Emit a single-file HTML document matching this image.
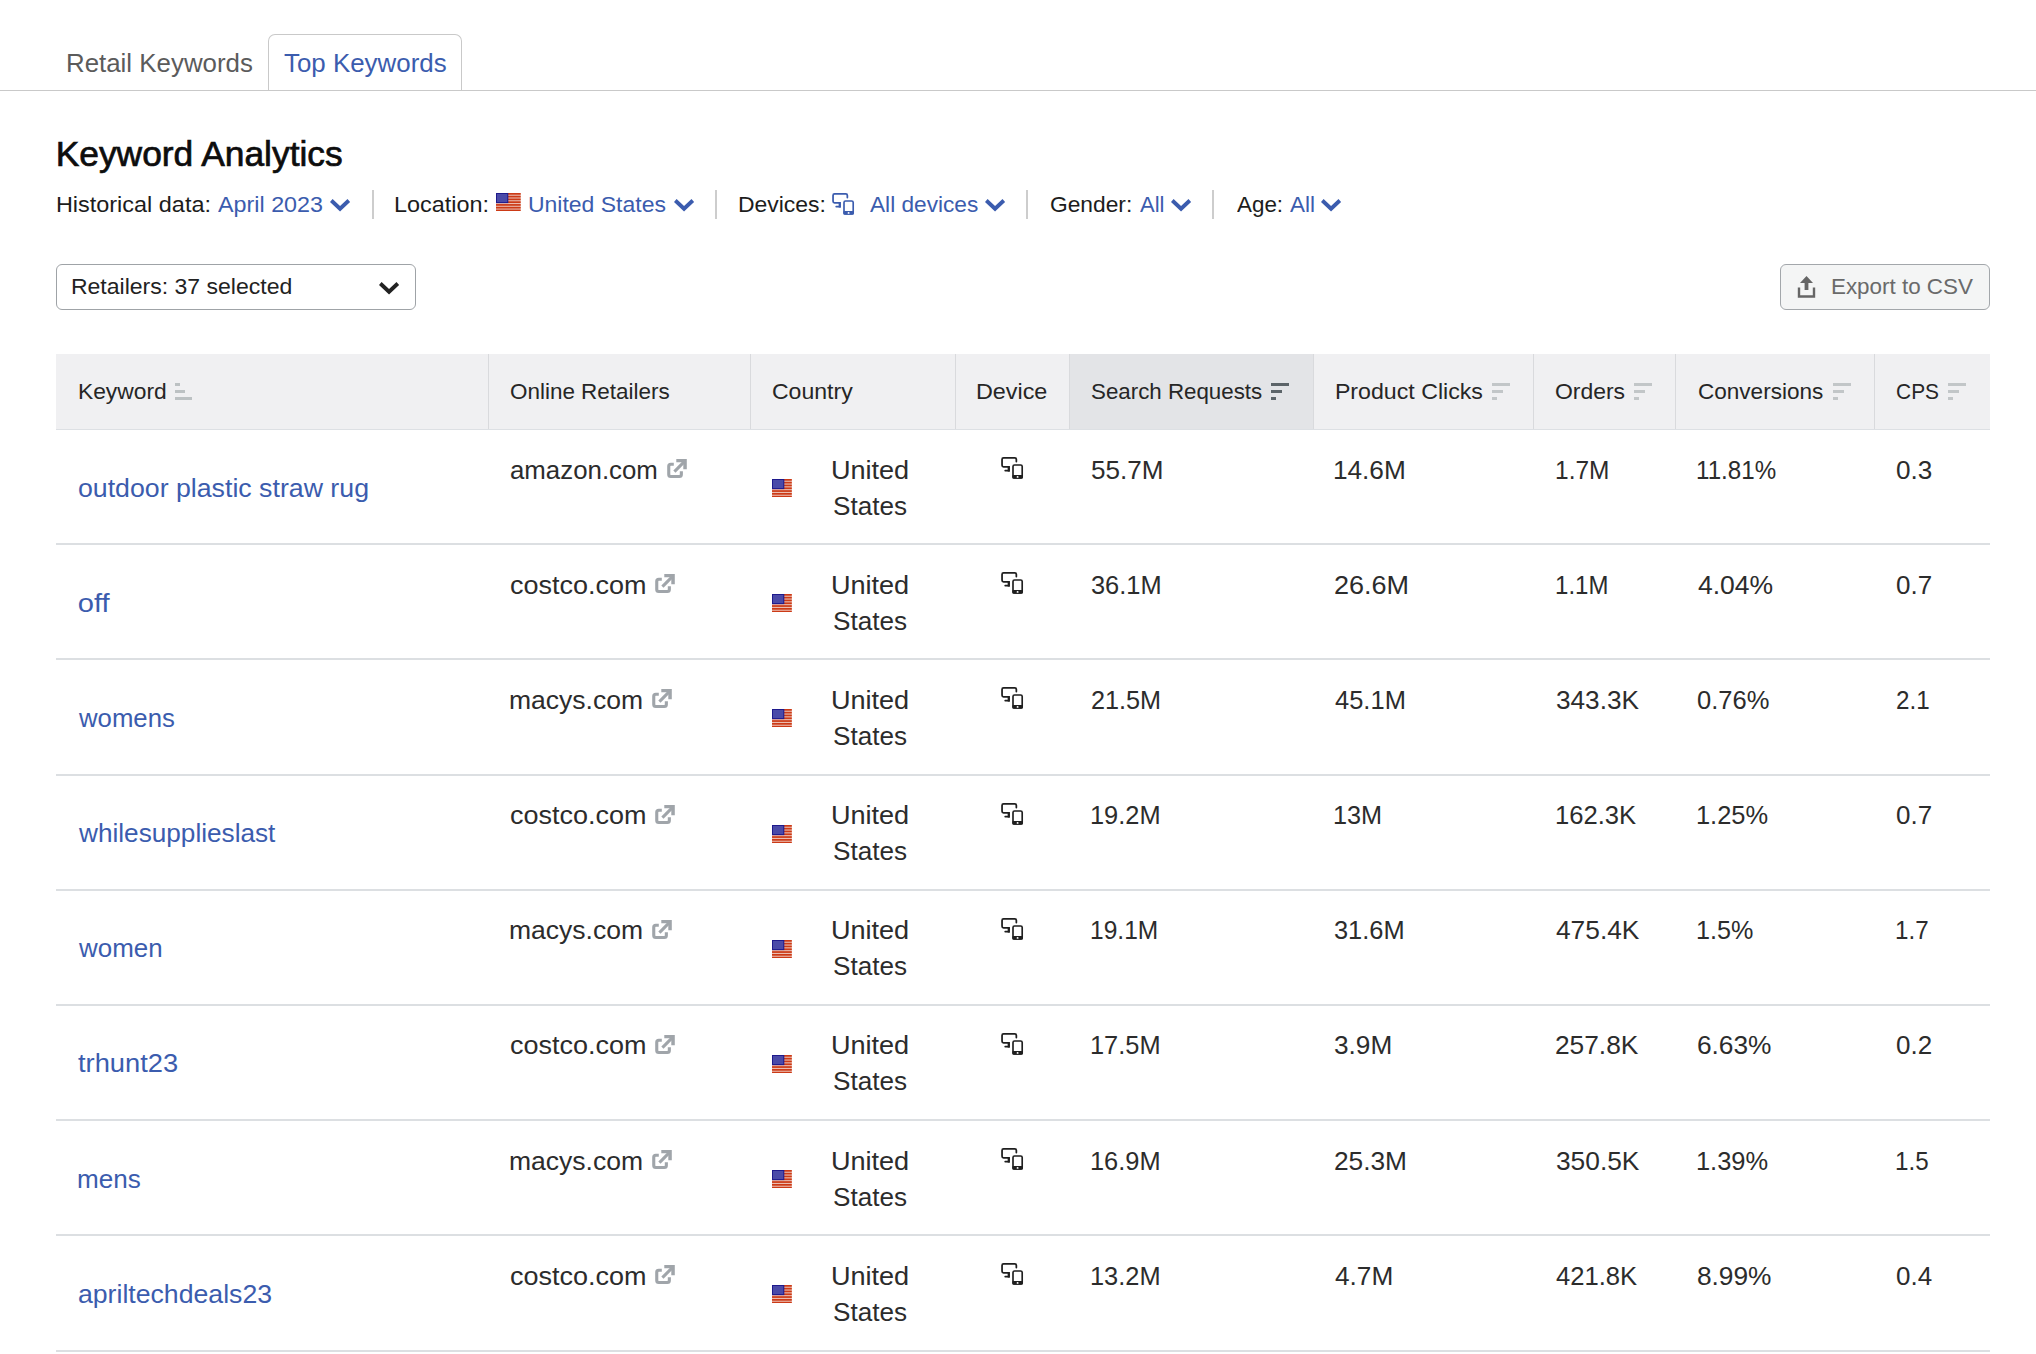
<!DOCTYPE html>
<html><head><meta charset="utf-8"><title>Keyword Analytics</title>
<style>
html,body{margin:0;padding:0;background:#fff;}
body{width:2036px;height:1354px;position:relative;overflow:hidden;font-family:"Liberation Sans",sans-serif;}
.abs{position:absolute;}
.t{position:absolute;white-space:nowrap;}
svg{display:block}
</style></head><body>
<div class="abs" style="left:0;top:89.5px;width:2036px;height:1.5px;background:#c9c9c9"></div>
<div class="abs" style="left:268px;top:34px;width:194px;height:57px;border:1.5px solid #c9c9c9;border-bottom:none;border-radius:7px 7px 0 0;box-sizing:border-box;"></div>
<div class="t" style="left:66.48px;top:50.58px;font-size:25.3px;line-height:25.3px;color:#5b5b5b;transform:scaleX(1.0229);transform-origin:2.02px 0;">Retail Keywords</div>
<div class="t" style="left:283.99px;top:50.58px;font-size:25.3px;line-height:25.3px;color:#3b5cae;transform:scaleX(1.0235);transform-origin:0.51px 0;">Top Keywords</div>
<div class="t" style="left:55.67px;top:136.45px;font-size:35.38px;line-height:35.38px;color:#0d0d0d;-webkit-text-stroke:0.7px #0d0d0d;">Keyword Analytics</div>
<div class="t" style="left:55.74px;top:194.18px;font-size:22.0px;line-height:22.0px;color:#1c1c1c;transform:scaleX(1.0658);transform-origin:1.76px 0;">Historical data:</div>
<div class="t" style="left:218.00px;top:194.18px;font-size:22.0px;line-height:22.0px;color:#3b5cae;transform:scaleX(1.0599);transform-origin:0.00px 0;">April 2023</div>
<svg class="abs" style="left:330px;top:198.5px" width="21.0" height="13.0" viewBox="0 0 21.0 13.0"><polygon points="0.00,2.90 2.60,0.00 10.05,7.00 17.50,0.00 20.10,2.90 10.05,12.40" fill="#3b5cae"/></svg>
<div class="abs" style="left:371.5px;top:189.5px;width:2px;height:29px;background:#cdcdcd"></div>
<div class="t" style="left:394.49px;top:194.18px;font-size:22.0px;line-height:22.0px;color:#1c1c1c;transform:scaleX(1.0647);transform-origin:1.76px 0;">Location:</div>
<svg class="abs" style="left:496.2px;top:192.8px" width="24.7" height="18.3" viewBox="0 0 24.7 18.3"><rect x="0" y="0" width="24.7" height="18.3" fill="#ebbcb0"/><rect x="0" y="0.000" width="24.7" height="1.7" fill="#cc3a16"/><rect x="0" y="2.767" width="24.7" height="1.7" fill="#cc3a16"/><rect x="0" y="5.533" width="24.7" height="1.7" fill="#cc3a16"/><rect x="0" y="8.300" width="24.7" height="1.7" fill="#cc3a16"/><rect x="0" y="11.067" width="24.7" height="1.7" fill="#cc3a16"/><rect x="0" y="13.833" width="24.7" height="1.7" fill="#cc3a16"/><rect x="0" y="16.600" width="24.7" height="1.7" fill="#cc3a16"/><rect x="0" y="0" width="12.30" height="10.10" fill="#1e1a8c"/><rect x="1" y="1" width="10.30" height="8.10" fill="#4a4aa8"/></svg>
<div class="t" style="left:527.85px;top:194.18px;font-size:22.0px;line-height:22.0px;color:#3b5cae;transform:scaleX(1.0448);transform-origin:1.65px 0;">United States</div>
<svg class="abs" style="left:673.5px;top:198.5px" width="21.0" height="13.0" viewBox="0 0 21.0 13.0"><polygon points="0.00,2.90 2.60,0.00 10.05,7.00 17.50,0.00 20.10,2.90 10.05,12.40" fill="#3b5cae"/></svg>
<div class="abs" style="left:714.5px;top:189.5px;width:2px;height:29px;background:#cdcdcd"></div>
<div class="t" style="left:737.74px;top:194.18px;font-size:22.0px;line-height:22.0px;color:#1c1c1c;transform:scaleX(1.0432);transform-origin:1.76px 0;">Devices:</div>
<svg class="abs" style="left:830.5px;top:192px" width="26" height="26" viewBox="0 0 26 26"><path d="M16.35 5.6 V3.5 Q16.35 1.95 14.8 1.95 H3.5 Q2.05 1.95 2.05 3.5 V9.3 Q2.05 10.85 3.5 10.85 H8.8 V14.6 H5.2" fill="none" stroke="#3b5cae" stroke-width="1.75" stroke-linecap="round"/><path d="M7.7 10.1 H9.9 V15.6 H7.7 Z" fill="#3b5cae"/><rect x="13" y="9" width="9.2" height="13" rx="1.5" fill="none" stroke="#3b5cae" stroke-width="1.65"/><rect x="12.3" y="18.9" width="10.6" height="3.9" rx="1.2" fill="#3b5cae"/><circle cx="17.6" cy="20.9" r="0.95" fill="#fff"/></svg><div class="t" style="left:869.50px;top:194.18px;font-size:22.0px;line-height:22.0px;color:#3b5cae;transform:scaleX(1.0298);transform-origin:0.00px 0;">All devices</div>
<svg class="abs" style="left:985.25px;top:198.5px" width="21.0" height="13.0" viewBox="0 0 21.0 13.0"><polygon points="0.00,2.90 2.60,0.00 10.05,7.00 17.50,0.00 20.10,2.90 10.05,12.40" fill="#3b5cae"/></svg>
<div class="abs" style="left:1026px;top:189.5px;width:2px;height:29px;background:#cdcdcd"></div>
<div class="t" style="left:1049.65px;top:194.18px;font-size:22.0px;line-height:22.0px;color:#1c1c1c;transform:scaleX(1.0348);transform-origin:1.10px 0;">Gender:</div>
<div class="t" style="left:1139.50px;top:194.18px;font-size:22.0px;line-height:22.0px;color:#3b5cae;transform:scaleX(1.0004);transform-origin:0.00px 0;">All</div>
<svg class="abs" style="left:1171px;top:198.5px" width="21.0" height="13.0" viewBox="0 0 21.0 13.0"><polygon points="0.00,2.90 2.60,0.00 10.05,7.00 17.50,0.00 20.10,2.90 10.05,12.40" fill="#3b5cae"/></svg>
<div class="abs" style="left:1212px;top:189.5px;width:2px;height:29px;background:#cdcdcd"></div>
<div class="t" style="left:1236.75px;top:194.18px;font-size:22.0px;line-height:22.0px;color:#1c1c1c;transform:scaleX(1.0178);transform-origin:0.00px 0;">Age:</div>
<div class="t" style="left:1289.50px;top:194.18px;font-size:22.0px;line-height:22.0px;color:#3b5cae;transform:scaleX(1.0222);transform-origin:0.00px 0;">All</div>
<svg class="abs" style="left:1321px;top:198.5px" width="21.0" height="13.0" viewBox="0 0 21.0 13.0"><polygon points="0.00,2.90 2.60,0.00 10.05,7.00 17.50,0.00 20.10,2.90 10.05,12.40" fill="#3b5cae"/></svg>
<div class="abs" style="left:56px;top:264px;width:360px;height:46px;border:1.5px solid #9fa3a7;border-radius:6px;box-sizing:border-box"></div>
<div class="t" style="left:70.74px;top:276.18px;font-size:22.0px;line-height:22.0px;color:#222;transform:scaleX(1.0464);transform-origin:1.76px 0;">Retailers: 37 selected</div>
<svg class="abs" style="left:379px;top:281.6px" width="21.0" height="13.0" viewBox="0 0 21.0 13.0"><polygon points="0.00,2.90 2.60,0.00 10.05,7.00 17.50,0.00 20.10,2.90 10.05,12.40" fill="#222"/></svg>
<div class="abs" style="left:1780px;top:264px;width:210px;height:46px;border:1.5px solid #a3a7ab;border-radius:6px;box-sizing:border-box;background:#f4f5f5"></div>
<svg class="abs" style="left:1796px;top:275px" width="22" height="24" viewBox="0 0 22 24"><path d="M10.5 1 L17 8 H12.4 V15 H8.6 V8 H4 Z" fill="#666"/><path d="M3 12.5 V21.5 H18 V12.5" fill="none" stroke="#666" stroke-width="2.4"/></svg><div class="t" style="left:1831.49px;top:276.18px;font-size:22.0px;line-height:22.0px;color:#6a6a6a;transform:scaleX(1.0182);transform-origin:1.76px 0;">Export to CSV</div>
<div class="abs" style="left:56px;top:354px;width:1934px;height:76px;background:#f0f0f2"></div>
<div class="abs" style="left:1069.5px;top:354px;width:244px;height:76px;background:#e3e4e7"></div>
<div class="abs" style="left:488.0px;top:354px;width:1px;height:75px;background:#d9dadd"></div>
<div class="abs" style="left:750.0px;top:354px;width:1px;height:75px;background:#d9dadd"></div>
<div class="abs" style="left:955.0px;top:354px;width:1px;height:75px;background:#d9dadd"></div>
<div class="abs" style="left:1069.0px;top:354px;width:1px;height:75px;background:#d9dadd"></div>
<div class="abs" style="left:1313.0px;top:354px;width:1px;height:75px;background:#d9dadd"></div>
<div class="abs" style="left:1533.0px;top:354px;width:1px;height:75px;background:#d9dadd"></div>
<div class="abs" style="left:1675.0px;top:354px;width:1px;height:75px;background:#d9dadd"></div>
<div class="abs" style="left:1874.0px;top:354px;width:1px;height:75px;background:#d9dadd"></div>
<div class="abs" style="left:56px;top:429px;width:1934px;height:1px;background:#dde0e4"></div>
<div class="t" style="left:77.72px;top:381.21px;font-size:22.2px;line-height:22.2px;color:#262626;transform:scaleX(1.0284);transform-origin:1.78px 0;">Keyword</div>
<div class="abs" style="left:175.1px;top:382.75px;width:5px;height:3.4px;background:#bcc1c3"></div><div class="abs" style="left:175.1px;top:389.5px;width:10px;height:3.4px;background:#bcc1c3"></div><div class="abs" style="left:175.1px;top:396.5px;width:17px;height:3.4px;background:#bcc1c3"></div>
<div class="t" style="left:510.00px;top:381.21px;font-size:22.2px;line-height:22.2px;color:#262626;transform:scaleX(1.0117);transform-origin:1.00px 0;">Online Retailers</div>
<div class="t" style="left:772.09px;top:381.21px;font-size:22.2px;line-height:22.2px;color:#262626;transform:scaleX(1.0393);transform-origin:1.11px 0;">Country</div>
<div class="t" style="left:976.22px;top:381.21px;font-size:22.2px;line-height:22.2px;color:#262626;transform:scaleX(1.0531);transform-origin:1.78px 0;">Device</div>
<div class="t" style="left:1090.90px;top:381.21px;font-size:22.2px;line-height:22.2px;color:#262626;transform:scaleX(1.0059);transform-origin:1.00px 0;">Search Requests</div>
<div class="abs" style="left:1270.7px;top:382.75px;width:18.4px;height:3.4px;background:#5c6469"></div><div class="abs" style="left:1270.7px;top:389.5px;width:11px;height:3.4px;background:#5c6469"></div><div class="abs" style="left:1270.7px;top:396.75px;width:5.4px;height:3.4px;background:#5c6469"></div>
<div class="t" style="left:1334.52px;top:381.21px;font-size:22.2px;line-height:22.2px;color:#262626;transform:scaleX(1.0438);transform-origin:1.78px 0;">Product Clicks</div>
<div class="abs" style="left:1491.7px;top:382.75px;width:18.4px;height:3.4px;background:#c2c6c8"></div><div class="abs" style="left:1491.7px;top:389.5px;width:11px;height:3.4px;background:#c2c6c8"></div><div class="abs" style="left:1491.7px;top:396.75px;width:5.4px;height:3.4px;background:#c2c6c8"></div>
<div class="t" style="left:1555.10px;top:381.21px;font-size:22.2px;line-height:22.2px;color:#262626;transform:scaleX(1.0341);transform-origin:1.00px 0;">Orders</div>
<div class="abs" style="left:1633.9px;top:382.75px;width:18.4px;height:3.4px;background:#c2c6c8"></div><div class="abs" style="left:1633.9px;top:389.5px;width:11px;height:3.4px;background:#c2c6c8"></div><div class="abs" style="left:1633.9px;top:396.75px;width:5.4px;height:3.4px;background:#c2c6c8"></div>
<div class="t" style="left:1697.89px;top:381.21px;font-size:22.2px;line-height:22.2px;color:#262626;transform:scaleX(1.0161);transform-origin:1.11px 0;">Conversions</div>
<div class="abs" style="left:1832.7px;top:382.75px;width:18.4px;height:3.4px;background:#c2c6c8"></div><div class="abs" style="left:1832.7px;top:389.5px;width:11px;height:3.4px;background:#c2c6c8"></div><div class="abs" style="left:1832.7px;top:396.75px;width:5.4px;height:3.4px;background:#c2c6c8"></div>
<div class="t" style="left:1896.29px;top:381.21px;font-size:22.2px;line-height:22.2px;color:#262626;transform:scaleX(0.9423);transform-origin:1.11px 0;">CPS</div>
<div class="abs" style="left:1948px;top:382.75px;width:18.4px;height:3.4px;background:#c2c6c8"></div><div class="abs" style="left:1948px;top:389.5px;width:11px;height:3.4px;background:#c2c6c8"></div><div class="abs" style="left:1948px;top:396.75px;width:5.4px;height:3.4px;background:#c2c6c8"></div>
<div class="t" style="left:77.74px;top:475.97px;font-size:25.2px;line-height:25.2px;color:#3b5cae;transform:scaleX(1.0607);transform-origin:1.01px 0;">outdoor plastic straw rug</div>
<div class="t" style="left:509.73px;top:457.63px;font-size:25.6px;line-height:25.6px;color:#2c2c2c;transform:scaleX(1.0092);transform-origin:1.02px 0;">amazon.com</div>
<svg class="abs" style="left:661.55px;top:454.00px" width="30" height="28" viewBox="0 0 30 28"><path d="M11.8 10.25 H8.75 Q6.75 10.25 6.75 12.25 V20.45 Q6.75 22.45 8.75 22.45 H17.35 Q19.35 22.45 19.35 20.45 V17.2" fill="none" stroke="#a0a5aa" stroke-width="3.1"/><polygon points="14.3,5.1 24.8,5.1 24.8,15.3 21.3,15.3 21.3,8.3 14.3,8.3" fill="#a0a5aa"/><path d="M12.4 17.6 L22.6 7.4" stroke="#a0a5aa" stroke-width="3.1" fill="none"/></svg><svg class="abs" style="left:772.1px;top:478.6px" width="19.8" height="18.5" viewBox="0 0 19.8 18.5"><rect x="0" y="0" width="19.8" height="18.5" fill="#ebbcb0"/><rect x="0" y="0.000" width="19.8" height="1.7" fill="#cc3a16"/><rect x="0" y="2.800" width="19.8" height="1.7" fill="#cc3a16"/><rect x="0" y="5.600" width="19.8" height="1.7" fill="#cc3a16"/><rect x="0" y="8.400" width="19.8" height="1.7" fill="#cc3a16"/><rect x="0" y="11.200" width="19.8" height="1.7" fill="#cc3a16"/><rect x="0" y="14.000" width="19.8" height="1.7" fill="#cc3a16"/><rect x="0" y="16.800" width="19.8" height="1.7" fill="#cc3a16"/><rect x="0" y="0" width="12.30" height="10.10" fill="#1e1a8c"/><rect x="1" y="1" width="10.30" height="8.10" fill="#4a4aa8"/></svg>
<div class="t" style="left:831.08px;top:457.63px;font-size:25.6px;line-height:25.6px;color:#2c2c2c;transform:scaleX(1.0582);transform-origin:1.92px 0;">United</div>
<div class="t" style="left:833.10px;top:493.63px;font-size:25.6px;line-height:25.6px;color:#2c2c2c;transform:scaleX(1.0209);transform-origin:1.15px 0;">States</div>
<svg class="abs" style="left:1000.0px;top:456.0px" width="26" height="26" viewBox="0 0 26 26"><path d="M16.35 5.6 V3.5 Q16.35 1.95 14.8 1.95 H3.5 Q2.05 1.95 2.05 3.5 V9.3 Q2.05 10.85 3.5 10.85 H8.8 V14.6 H5.2" fill="none" stroke="#1f1f1f" stroke-width="1.75" stroke-linecap="round"/><path d="M7.7 10.1 H9.9 V15.6 H7.7 Z" fill="#1f1f1f"/><rect x="13" y="9" width="9.2" height="13" rx="1.5" fill="none" stroke="#1f1f1f" stroke-width="1.65"/><rect x="12.3" y="18.9" width="10.6" height="3.9" rx="1.2" fill="#1f1f1f"/><circle cx="17.6" cy="20.9" r="0.95" fill="#fff"/></svg><div class="t" style="left:1091.00px;top:458.22px;font-size:24.9px;line-height:24.9px;color:#2c2c2c;transform:scaleX(1.0475);transform-origin:1.00px 0;">55.7M</div>
<div class="t" style="left:1333.38px;top:458.22px;font-size:24.9px;line-height:24.9px;color:#2c2c2c;transform:scaleX(1.0538);transform-origin:1.87px 0;">14.6M</div>
<div class="t" style="left:1554.63px;top:458.22px;font-size:24.9px;line-height:24.9px;color:#2c2c2c;transform:scaleX(0.9821);transform-origin:1.87px 0;">1.7M</div>
<div class="t" style="left:1696.38px;top:458.22px;font-size:24.9px;line-height:24.9px;color:#2c2c2c;transform:scaleX(0.9696);transform-origin:1.87px 0;">11.81%</div>
<div class="t" style="left:1896.00px;top:458.22px;font-size:24.9px;line-height:24.9px;color:#2c2c2c;transform:scaleX(1.0500);transform-origin:1.00px 0;">0.3</div>
<div class="abs" style="left:56px;top:543px;width:1934px;height:2px;background:#dcdfe2"></div>
<div class="t" style="left:77.74px;top:590.97px;font-size:25.2px;line-height:25.2px;color:#3b5cae;transform:scaleX(1.1566);transform-origin:1.01px 0;">off</div>
<div class="t" style="left:509.73px;top:572.63px;font-size:25.6px;line-height:25.6px;color:#2c2c2c;transform:scaleX(1.0544);transform-origin:1.02px 0;">costco.com</div>
<svg class="abs" style="left:650.10px;top:569.00px" width="30" height="28" viewBox="0 0 30 28"><path d="M11.8 10.25 H8.75 Q6.75 10.25 6.75 12.25 V20.45 Q6.75 22.45 8.75 22.45 H17.35 Q19.35 22.45 19.35 20.45 V17.2" fill="none" stroke="#a0a5aa" stroke-width="3.1"/><polygon points="14.3,5.1 24.8,5.1 24.8,15.3 21.3,15.3 21.3,8.3 14.3,8.3" fill="#a0a5aa"/><path d="M12.4 17.6 L22.6 7.4" stroke="#a0a5aa" stroke-width="3.1" fill="none"/></svg><svg class="abs" style="left:772.1px;top:593.6px" width="19.8" height="18.5" viewBox="0 0 19.8 18.5"><rect x="0" y="0" width="19.8" height="18.5" fill="#ebbcb0"/><rect x="0" y="0.000" width="19.8" height="1.7" fill="#cc3a16"/><rect x="0" y="2.800" width="19.8" height="1.7" fill="#cc3a16"/><rect x="0" y="5.600" width="19.8" height="1.7" fill="#cc3a16"/><rect x="0" y="8.400" width="19.8" height="1.7" fill="#cc3a16"/><rect x="0" y="11.200" width="19.8" height="1.7" fill="#cc3a16"/><rect x="0" y="14.000" width="19.8" height="1.7" fill="#cc3a16"/><rect x="0" y="16.800" width="19.8" height="1.7" fill="#cc3a16"/><rect x="0" y="0" width="12.30" height="10.10" fill="#1e1a8c"/><rect x="1" y="1" width="10.30" height="8.10" fill="#4a4aa8"/></svg>
<div class="t" style="left:831.08px;top:572.63px;font-size:25.6px;line-height:25.6px;color:#2c2c2c;transform:scaleX(1.0582);transform-origin:1.92px 0;">United</div>
<div class="t" style="left:833.10px;top:608.63px;font-size:25.6px;line-height:25.6px;color:#2c2c2c;transform:scaleX(1.0209);transform-origin:1.15px 0;">States</div>
<svg class="abs" style="left:1000.0px;top:571.0px" width="26" height="26" viewBox="0 0 26 26"><path d="M16.35 5.6 V3.5 Q16.35 1.95 14.8 1.95 H3.5 Q2.05 1.95 2.05 3.5 V9.3 Q2.05 10.85 3.5 10.85 H8.8 V14.6 H5.2" fill="none" stroke="#1f1f1f" stroke-width="1.75" stroke-linecap="round"/><path d="M7.7 10.1 H9.9 V15.6 H7.7 Z" fill="#1f1f1f"/><rect x="13" y="9" width="9.2" height="13" rx="1.5" fill="none" stroke="#1f1f1f" stroke-width="1.65"/><rect x="12.3" y="18.9" width="10.6" height="3.9" rx="1.2" fill="#1f1f1f"/><circle cx="17.6" cy="20.9" r="0.95" fill="#fff"/></svg><div class="t" style="left:1091.00px;top:573.22px;font-size:24.9px;line-height:24.9px;color:#2c2c2c;transform:scaleX(1.0210);transform-origin:1.00px 0;">36.1M</div>
<div class="t" style="left:1334.01px;top:573.22px;font-size:24.9px;line-height:24.9px;color:#2c2c2c;transform:scaleX(1.0856);transform-origin:1.25px 0;">26.6M</div>
<div class="t" style="left:1554.63px;top:573.22px;font-size:24.9px;line-height:24.9px;color:#2c2c2c;transform:scaleX(0.9634);transform-origin:1.87px 0;">1.1M</div>
<div class="t" style="left:1697.75px;top:573.22px;font-size:24.9px;line-height:24.9px;color:#2c2c2c;transform:scaleX(1.0654);transform-origin:0.50px 0;">4.04%</div>
<div class="t" style="left:1896.00px;top:573.22px;font-size:24.9px;line-height:24.9px;color:#2c2c2c;transform:scaleX(1.0441);transform-origin:1.00px 0;">0.7</div>
<div class="abs" style="left:56px;top:658px;width:1934px;height:2px;background:#dcdfe2"></div>
<div class="t" style="left:78.75px;top:705.97px;font-size:25.2px;line-height:25.2px;color:#3b5cae;transform:scaleX(1.0216);transform-origin:0.00px 0;">womens</div>
<div class="t" style="left:509.09px;top:687.63px;font-size:25.6px;line-height:25.6px;color:#2c2c2c;transform:scaleX(1.0360);transform-origin:1.66px 0;">macys.com</div>
<svg class="abs" style="left:647.10px;top:684.00px" width="30" height="28" viewBox="0 0 30 28"><path d="M11.8 10.25 H8.75 Q6.75 10.25 6.75 12.25 V20.45 Q6.75 22.45 8.75 22.45 H17.35 Q19.35 22.45 19.35 20.45 V17.2" fill="none" stroke="#a0a5aa" stroke-width="3.1"/><polygon points="14.3,5.1 24.8,5.1 24.8,15.3 21.3,15.3 21.3,8.3 14.3,8.3" fill="#a0a5aa"/><path d="M12.4 17.6 L22.6 7.4" stroke="#a0a5aa" stroke-width="3.1" fill="none"/></svg><svg class="abs" style="left:772.1px;top:708.6px" width="19.8" height="18.5" viewBox="0 0 19.8 18.5"><rect x="0" y="0" width="19.8" height="18.5" fill="#ebbcb0"/><rect x="0" y="0.000" width="19.8" height="1.7" fill="#cc3a16"/><rect x="0" y="2.800" width="19.8" height="1.7" fill="#cc3a16"/><rect x="0" y="5.600" width="19.8" height="1.7" fill="#cc3a16"/><rect x="0" y="8.400" width="19.8" height="1.7" fill="#cc3a16"/><rect x="0" y="11.200" width="19.8" height="1.7" fill="#cc3a16"/><rect x="0" y="14.000" width="19.8" height="1.7" fill="#cc3a16"/><rect x="0" y="16.800" width="19.8" height="1.7" fill="#cc3a16"/><rect x="0" y="0" width="12.30" height="10.10" fill="#1e1a8c"/><rect x="1" y="1" width="10.30" height="8.10" fill="#4a4aa8"/></svg>
<div class="t" style="left:831.08px;top:687.63px;font-size:25.6px;line-height:25.6px;color:#2c2c2c;transform:scaleX(1.0582);transform-origin:1.92px 0;">United</div>
<div class="t" style="left:833.10px;top:723.63px;font-size:25.6px;line-height:25.6px;color:#2c2c2c;transform:scaleX(1.0209);transform-origin:1.15px 0;">States</div>
<svg class="abs" style="left:1000.0px;top:686.0px" width="26" height="26" viewBox="0 0 26 26"><path d="M16.35 5.6 V3.5 Q16.35 1.95 14.8 1.95 H3.5 Q2.05 1.95 2.05 3.5 V9.3 Q2.05 10.85 3.5 10.85 H8.8 V14.6 H5.2" fill="none" stroke="#1f1f1f" stroke-width="1.75" stroke-linecap="round"/><path d="M7.7 10.1 H9.9 V15.6 H7.7 Z" fill="#1f1f1f"/><rect x="13" y="9" width="9.2" height="13" rx="1.5" fill="none" stroke="#1f1f1f" stroke-width="1.65"/><rect x="12.3" y="18.9" width="10.6" height="3.9" rx="1.2" fill="#1f1f1f"/><circle cx="17.6" cy="20.9" r="0.95" fill="#fff"/></svg><div class="t" style="left:1090.76px;top:688.22px;font-size:24.9px;line-height:24.9px;color:#2c2c2c;transform:scaleX(1.0135);transform-origin:1.25px 0;">21.5M</div>
<div class="t" style="left:1334.75px;top:688.22px;font-size:24.9px;line-height:24.9px;color:#2c2c2c;transform:scaleX(1.0247);transform-origin:0.50px 0;">45.1M</div>
<div class="t" style="left:1555.50px;top:688.22px;font-size:24.9px;line-height:24.9px;color:#2c2c2c;transform:scaleX(1.0523);transform-origin:1.00px 0;">343.3K</div>
<div class="t" style="left:1697.25px;top:688.22px;font-size:24.9px;line-height:24.9px;color:#2c2c2c;transform:scaleX(1.0258);transform-origin:1.00px 0;">0.76%</div>
<div class="t" style="left:1895.76px;top:688.22px;font-size:24.9px;line-height:24.9px;color:#2c2c2c;transform:scaleX(0.9727);transform-origin:1.25px 0;">2.1</div>
<div class="abs" style="left:56px;top:774px;width:1934px;height:2px;background:#dcdfe2"></div>
<div class="t" style="left:78.75px;top:820.97px;font-size:25.2px;line-height:25.2px;color:#3b5cae;transform:scaleX(1.0391);transform-origin:0.00px 0;">whilesupplieslast</div>
<div class="t" style="left:509.73px;top:802.63px;font-size:25.6px;line-height:25.6px;color:#2c2c2c;transform:scaleX(1.0544);transform-origin:1.02px 0;">costco.com</div>
<svg class="abs" style="left:650.10px;top:800.00px" width="30" height="28" viewBox="0 0 30 28"><path d="M11.8 10.25 H8.75 Q6.75 10.25 6.75 12.25 V20.45 Q6.75 22.45 8.75 22.45 H17.35 Q19.35 22.45 19.35 20.45 V17.2" fill="none" stroke="#a0a5aa" stroke-width="3.1"/><polygon points="14.3,5.1 24.8,5.1 24.8,15.3 21.3,15.3 21.3,8.3 14.3,8.3" fill="#a0a5aa"/><path d="M12.4 17.6 L22.6 7.4" stroke="#a0a5aa" stroke-width="3.1" fill="none"/></svg><svg class="abs" style="left:772.1px;top:824.6px" width="19.8" height="18.5" viewBox="0 0 19.8 18.5"><rect x="0" y="0" width="19.8" height="18.5" fill="#ebbcb0"/><rect x="0" y="0.000" width="19.8" height="1.7" fill="#cc3a16"/><rect x="0" y="2.800" width="19.8" height="1.7" fill="#cc3a16"/><rect x="0" y="5.600" width="19.8" height="1.7" fill="#cc3a16"/><rect x="0" y="8.400" width="19.8" height="1.7" fill="#cc3a16"/><rect x="0" y="11.200" width="19.8" height="1.7" fill="#cc3a16"/><rect x="0" y="14.000" width="19.8" height="1.7" fill="#cc3a16"/><rect x="0" y="16.800" width="19.8" height="1.7" fill="#cc3a16"/><rect x="0" y="0" width="12.30" height="10.10" fill="#1e1a8c"/><rect x="1" y="1" width="10.30" height="8.10" fill="#4a4aa8"/></svg>
<div class="t" style="left:831.08px;top:802.63px;font-size:25.6px;line-height:25.6px;color:#2c2c2c;transform:scaleX(1.0582);transform-origin:1.92px 0;">United</div>
<div class="t" style="left:833.10px;top:838.63px;font-size:25.6px;line-height:25.6px;color:#2c2c2c;transform:scaleX(1.0209);transform-origin:1.15px 0;">States</div>
<svg class="abs" style="left:1000.0px;top:802.0px" width="26" height="26" viewBox="0 0 26 26"><path d="M16.35 5.6 V3.5 Q16.35 1.95 14.8 1.95 H3.5 Q2.05 1.95 2.05 3.5 V9.3 Q2.05 10.85 3.5 10.85 H8.8 V14.6 H5.2" fill="none" stroke="#1f1f1f" stroke-width="1.75" stroke-linecap="round"/><path d="M7.7 10.1 H9.9 V15.6 H7.7 Z" fill="#1f1f1f"/><rect x="13" y="9" width="9.2" height="13" rx="1.5" fill="none" stroke="#1f1f1f" stroke-width="1.65"/><rect x="12.3" y="18.9" width="10.6" height="3.9" rx="1.2" fill="#1f1f1f"/><circle cx="17.6" cy="20.9" r="0.95" fill="#fff"/></svg><div class="t" style="left:1090.13px;top:803.22px;font-size:24.9px;line-height:24.9px;color:#2c2c2c;transform:scaleX(1.0208);transform-origin:1.87px 0;">19.2M</div>
<div class="t" style="left:1333.38px;top:803.22px;font-size:24.9px;line-height:24.9px;color:#2c2c2c;transform:scaleX(1.0161);transform-origin:1.87px 0;">13M</div>
<div class="t" style="left:1554.63px;top:803.22px;font-size:24.9px;line-height:24.9px;color:#2c2c2c;transform:scaleX(1.0279);transform-origin:1.87px 0;">162.3K</div>
<div class="t" style="left:1696.38px;top:803.22px;font-size:24.9px;line-height:24.9px;color:#2c2c2c;transform:scaleX(1.0226);transform-origin:1.87px 0;">1.25%</div>
<div class="t" style="left:1896.00px;top:803.22px;font-size:24.9px;line-height:24.9px;color:#2c2c2c;transform:scaleX(1.0441);transform-origin:1.00px 0;">0.7</div>
<div class="abs" style="left:56px;top:889px;width:1934px;height:2px;background:#dcdfe2"></div>
<div class="t" style="left:78.75px;top:935.97px;font-size:25.2px;line-height:25.2px;color:#3b5cae;transform:scaleX(1.0297);transform-origin:0.00px 0;">women</div>
<div class="t" style="left:509.09px;top:917.63px;font-size:25.6px;line-height:25.6px;color:#2c2c2c;transform:scaleX(1.0360);transform-origin:1.66px 0;">macys.com</div>
<svg class="abs" style="left:647.10px;top:915.00px" width="30" height="28" viewBox="0 0 30 28"><path d="M11.8 10.25 H8.75 Q6.75 10.25 6.75 12.25 V20.45 Q6.75 22.45 8.75 22.45 H17.35 Q19.35 22.45 19.35 20.45 V17.2" fill="none" stroke="#a0a5aa" stroke-width="3.1"/><polygon points="14.3,5.1 24.8,5.1 24.8,15.3 21.3,15.3 21.3,8.3 14.3,8.3" fill="#a0a5aa"/><path d="M12.4 17.6 L22.6 7.4" stroke="#a0a5aa" stroke-width="3.1" fill="none"/></svg><svg class="abs" style="left:772.1px;top:939.6px" width="19.8" height="18.5" viewBox="0 0 19.8 18.5"><rect x="0" y="0" width="19.8" height="18.5" fill="#ebbcb0"/><rect x="0" y="0.000" width="19.8" height="1.7" fill="#cc3a16"/><rect x="0" y="2.800" width="19.8" height="1.7" fill="#cc3a16"/><rect x="0" y="5.600" width="19.8" height="1.7" fill="#cc3a16"/><rect x="0" y="8.400" width="19.8" height="1.7" fill="#cc3a16"/><rect x="0" y="11.200" width="19.8" height="1.7" fill="#cc3a16"/><rect x="0" y="14.000" width="19.8" height="1.7" fill="#cc3a16"/><rect x="0" y="16.800" width="19.8" height="1.7" fill="#cc3a16"/><rect x="0" y="0" width="12.30" height="10.10" fill="#1e1a8c"/><rect x="1" y="1" width="10.30" height="8.10" fill="#4a4aa8"/></svg>
<div class="t" style="left:831.08px;top:917.63px;font-size:25.6px;line-height:25.6px;color:#2c2c2c;transform:scaleX(1.0582);transform-origin:1.92px 0;">United</div>
<div class="t" style="left:833.10px;top:953.63px;font-size:25.6px;line-height:25.6px;color:#2c2c2c;transform:scaleX(1.0209);transform-origin:1.15px 0;">States</div>
<svg class="abs" style="left:1000.0px;top:917.0px" width="26" height="26" viewBox="0 0 26 26"><path d="M16.35 5.6 V3.5 Q16.35 1.95 14.8 1.95 H3.5 Q2.05 1.95 2.05 3.5 V9.3 Q2.05 10.85 3.5 10.85 H8.8 V14.6 H5.2" fill="none" stroke="#1f1f1f" stroke-width="1.75" stroke-linecap="round"/><path d="M7.7 10.1 H9.9 V15.6 H7.7 Z" fill="#1f1f1f"/><rect x="13" y="9" width="9.2" height="13" rx="1.5" fill="none" stroke="#1f1f1f" stroke-width="1.65"/><rect x="12.3" y="18.9" width="10.6" height="3.9" rx="1.2" fill="#1f1f1f"/><circle cx="17.6" cy="20.9" r="0.95" fill="#fff"/></svg><div class="t" style="left:1090.13px;top:918.22px;font-size:24.9px;line-height:24.9px;color:#2c2c2c;transform:scaleX(0.9856);transform-origin:1.87px 0;">19.1M</div>
<div class="t" style="left:1334.25px;top:918.22px;font-size:24.9px;line-height:24.9px;color:#2c2c2c;transform:scaleX(1.0214);transform-origin:1.00px 0;">31.6M</div>
<div class="t" style="left:1556.00px;top:918.22px;font-size:24.9px;line-height:24.9px;color:#2c2c2c;transform:scaleX(1.0580);transform-origin:0.50px 0;">475.4K</div>
<div class="t" style="left:1696.38px;top:918.22px;font-size:24.9px;line-height:24.9px;color:#2c2c2c;transform:scaleX(1.0111);transform-origin:1.87px 0;">1.5%</div>
<div class="t" style="left:1895.13px;top:918.22px;font-size:24.9px;line-height:24.9px;color:#2c2c2c;transform:scaleX(0.9704);transform-origin:1.87px 0;">1.7</div>
<div class="abs" style="left:56px;top:1004px;width:1934px;height:2px;background:#dcdfe2"></div>
<div class="t" style="left:78.37px;top:1050.97px;font-size:25.2px;line-height:25.2px;color:#3b5cae;transform:scaleX(1.0840);transform-origin:0.38px 0;">trhunt23</div>
<div class="t" style="left:509.73px;top:1032.63px;font-size:25.6px;line-height:25.6px;color:#2c2c2c;transform:scaleX(1.0544);transform-origin:1.02px 0;">costco.com</div>
<svg class="abs" style="left:650.10px;top:1030.00px" width="30" height="28" viewBox="0 0 30 28"><path d="M11.8 10.25 H8.75 Q6.75 10.25 6.75 12.25 V20.45 Q6.75 22.45 8.75 22.45 H17.35 Q19.35 22.45 19.35 20.45 V17.2" fill="none" stroke="#a0a5aa" stroke-width="3.1"/><polygon points="14.3,5.1 24.8,5.1 24.8,15.3 21.3,15.3 21.3,8.3 14.3,8.3" fill="#a0a5aa"/><path d="M12.4 17.6 L22.6 7.4" stroke="#a0a5aa" stroke-width="3.1" fill="none"/></svg><svg class="abs" style="left:772.1px;top:1054.6px" width="19.8" height="18.5" viewBox="0 0 19.8 18.5"><rect x="0" y="0" width="19.8" height="18.5" fill="#ebbcb0"/><rect x="0" y="0.000" width="19.8" height="1.7" fill="#cc3a16"/><rect x="0" y="2.800" width="19.8" height="1.7" fill="#cc3a16"/><rect x="0" y="5.600" width="19.8" height="1.7" fill="#cc3a16"/><rect x="0" y="8.400" width="19.8" height="1.7" fill="#cc3a16"/><rect x="0" y="11.200" width="19.8" height="1.7" fill="#cc3a16"/><rect x="0" y="14.000" width="19.8" height="1.7" fill="#cc3a16"/><rect x="0" y="16.800" width="19.8" height="1.7" fill="#cc3a16"/><rect x="0" y="0" width="12.30" height="10.10" fill="#1e1a8c"/><rect x="1" y="1" width="10.30" height="8.10" fill="#4a4aa8"/></svg>
<div class="t" style="left:831.08px;top:1032.63px;font-size:25.6px;line-height:25.6px;color:#2c2c2c;transform:scaleX(1.0582);transform-origin:1.92px 0;">United</div>
<div class="t" style="left:833.10px;top:1068.63px;font-size:25.6px;line-height:25.6px;color:#2c2c2c;transform:scaleX(1.0209);transform-origin:1.15px 0;">States</div>
<svg class="abs" style="left:1000.0px;top:1032.0px" width="26" height="26" viewBox="0 0 26 26"><path d="M16.35 5.6 V3.5 Q16.35 1.95 14.8 1.95 H3.5 Q2.05 1.95 2.05 3.5 V9.3 Q2.05 10.85 3.5 10.85 H8.8 V14.6 H5.2" fill="none" stroke="#1f1f1f" stroke-width="1.75" stroke-linecap="round"/><path d="M7.7 10.1 H9.9 V15.6 H7.7 Z" fill="#1f1f1f"/><rect x="13" y="9" width="9.2" height="13" rx="1.5" fill="none" stroke="#1f1f1f" stroke-width="1.65"/><rect x="12.3" y="18.9" width="10.6" height="3.9" rx="1.2" fill="#1f1f1f"/><circle cx="17.6" cy="20.9" r="0.95" fill="#fff"/></svg><div class="t" style="left:1090.13px;top:1033.22px;font-size:24.9px;line-height:24.9px;color:#2c2c2c;transform:scaleX(1.0208);transform-origin:1.87px 0;">17.5M</div>
<div class="t" style="left:1334.25px;top:1033.22px;font-size:24.9px;line-height:24.9px;color:#2c2c2c;transform:scaleX(1.0531);transform-origin:1.00px 0;">3.9M</div>
<div class="t" style="left:1555.26px;top:1033.22px;font-size:24.9px;line-height:24.9px;color:#2c2c2c;transform:scaleX(1.0579);transform-origin:1.25px 0;">257.8K</div>
<div class="t" style="left:1697.01px;top:1033.22px;font-size:24.9px;line-height:24.9px;color:#2c2c2c;transform:scaleX(1.0566);transform-origin:1.25px 0;">6.63%</div>
<div class="t" style="left:1896.00px;top:1033.22px;font-size:24.9px;line-height:24.9px;color:#2c2c2c;transform:scaleX(1.0441);transform-origin:1.00px 0;">0.2</div>
<div class="abs" style="left:56px;top:1119px;width:1934px;height:2px;background:#dcdfe2"></div>
<div class="t" style="left:77.11px;top:1166.97px;font-size:25.2px;line-height:25.2px;color:#3b5cae;transform:scaleX(1.0365);transform-origin:1.64px 0;">mens</div>
<div class="t" style="left:509.09px;top:1148.63px;font-size:25.6px;line-height:25.6px;color:#2c2c2c;transform:scaleX(1.0360);transform-origin:1.66px 0;">macys.com</div>
<svg class="abs" style="left:647.10px;top:1145.00px" width="30" height="28" viewBox="0 0 30 28"><path d="M11.8 10.25 H8.75 Q6.75 10.25 6.75 12.25 V20.45 Q6.75 22.45 8.75 22.45 H17.35 Q19.35 22.45 19.35 20.45 V17.2" fill="none" stroke="#a0a5aa" stroke-width="3.1"/><polygon points="14.3,5.1 24.8,5.1 24.8,15.3 21.3,15.3 21.3,8.3 14.3,8.3" fill="#a0a5aa"/><path d="M12.4 17.6 L22.6 7.4" stroke="#a0a5aa" stroke-width="3.1" fill="none"/></svg><svg class="abs" style="left:772.1px;top:1169.6px" width="19.8" height="18.5" viewBox="0 0 19.8 18.5"><rect x="0" y="0" width="19.8" height="18.5" fill="#ebbcb0"/><rect x="0" y="0.000" width="19.8" height="1.7" fill="#cc3a16"/><rect x="0" y="2.800" width="19.8" height="1.7" fill="#cc3a16"/><rect x="0" y="5.600" width="19.8" height="1.7" fill="#cc3a16"/><rect x="0" y="8.400" width="19.8" height="1.7" fill="#cc3a16"/><rect x="0" y="11.200" width="19.8" height="1.7" fill="#cc3a16"/><rect x="0" y="14.000" width="19.8" height="1.7" fill="#cc3a16"/><rect x="0" y="16.800" width="19.8" height="1.7" fill="#cc3a16"/><rect x="0" y="0" width="12.30" height="10.10" fill="#1e1a8c"/><rect x="1" y="1" width="10.30" height="8.10" fill="#4a4aa8"/></svg>
<div class="t" style="left:831.08px;top:1148.63px;font-size:25.6px;line-height:25.6px;color:#2c2c2c;transform:scaleX(1.0582);transform-origin:1.92px 0;">United</div>
<div class="t" style="left:833.10px;top:1184.63px;font-size:25.6px;line-height:25.6px;color:#2c2c2c;transform:scaleX(1.0209);transform-origin:1.15px 0;">States</div>
<svg class="abs" style="left:1000.0px;top:1147.0px" width="26" height="26" viewBox="0 0 26 26"><path d="M16.35 5.6 V3.5 Q16.35 1.95 14.8 1.95 H3.5 Q2.05 1.95 2.05 3.5 V9.3 Q2.05 10.85 3.5 10.85 H8.8 V14.6 H5.2" fill="none" stroke="#1f1f1f" stroke-width="1.75" stroke-linecap="round"/><path d="M7.7 10.1 H9.9 V15.6 H7.7 Z" fill="#1f1f1f"/><rect x="13" y="9" width="9.2" height="13" rx="1.5" fill="none" stroke="#1f1f1f" stroke-width="1.65"/><rect x="12.3" y="18.9" width="10.6" height="3.9" rx="1.2" fill="#1f1f1f"/><circle cx="17.6" cy="20.9" r="0.95" fill="#fff"/></svg><div class="t" style="left:1090.13px;top:1149.22px;font-size:24.9px;line-height:24.9px;color:#2c2c2c;transform:scaleX(1.0208);transform-origin:1.87px 0;">16.9M</div>
<div class="t" style="left:1334.01px;top:1149.22px;font-size:24.9px;line-height:24.9px;color:#2c2c2c;transform:scaleX(1.0562);transform-origin:1.25px 0;">25.3M</div>
<div class="t" style="left:1555.50px;top:1149.22px;font-size:24.9px;line-height:24.9px;color:#2c2c2c;transform:scaleX(1.0580);transform-origin:1.00px 0;">350.5K</div>
<div class="t" style="left:1696.38px;top:1149.22px;font-size:24.9px;line-height:24.9px;color:#2c2c2c;transform:scaleX(1.0226);transform-origin:1.87px 0;">1.39%</div>
<div class="t" style="left:1895.13px;top:1149.22px;font-size:24.9px;line-height:24.9px;color:#2c2c2c;transform:scaleX(0.9712);transform-origin:1.87px 0;">1.5</div>
<div class="abs" style="left:56px;top:1234px;width:1934px;height:2px;background:#dcdfe2"></div>
<div class="t" style="left:77.74px;top:1281.97px;font-size:25.2px;line-height:25.2px;color:#3b5cae;transform:scaleX(1.0582);transform-origin:1.01px 0;">apriltechdeals23</div>
<div class="t" style="left:509.73px;top:1263.63px;font-size:25.6px;line-height:25.6px;color:#2c2c2c;transform:scaleX(1.0544);transform-origin:1.02px 0;">costco.com</div>
<svg class="abs" style="left:650.10px;top:1260.00px" width="30" height="28" viewBox="0 0 30 28"><path d="M11.8 10.25 H8.75 Q6.75 10.25 6.75 12.25 V20.45 Q6.75 22.45 8.75 22.45 H17.35 Q19.35 22.45 19.35 20.45 V17.2" fill="none" stroke="#a0a5aa" stroke-width="3.1"/><polygon points="14.3,5.1 24.8,5.1 24.8,15.3 21.3,15.3 21.3,8.3 14.3,8.3" fill="#a0a5aa"/><path d="M12.4 17.6 L22.6 7.4" stroke="#a0a5aa" stroke-width="3.1" fill="none"/></svg><svg class="abs" style="left:772.1px;top:1284.6px" width="19.8" height="18.5" viewBox="0 0 19.8 18.5"><rect x="0" y="0" width="19.8" height="18.5" fill="#ebbcb0"/><rect x="0" y="0.000" width="19.8" height="1.7" fill="#cc3a16"/><rect x="0" y="2.800" width="19.8" height="1.7" fill="#cc3a16"/><rect x="0" y="5.600" width="19.8" height="1.7" fill="#cc3a16"/><rect x="0" y="8.400" width="19.8" height="1.7" fill="#cc3a16"/><rect x="0" y="11.200" width="19.8" height="1.7" fill="#cc3a16"/><rect x="0" y="14.000" width="19.8" height="1.7" fill="#cc3a16"/><rect x="0" y="16.800" width="19.8" height="1.7" fill="#cc3a16"/><rect x="0" y="0" width="12.30" height="10.10" fill="#1e1a8c"/><rect x="1" y="1" width="10.30" height="8.10" fill="#4a4aa8"/></svg>
<div class="t" style="left:831.08px;top:1263.63px;font-size:25.6px;line-height:25.6px;color:#2c2c2c;transform:scaleX(1.0582);transform-origin:1.92px 0;">United</div>
<div class="t" style="left:833.10px;top:1299.63px;font-size:25.6px;line-height:25.6px;color:#2c2c2c;transform:scaleX(1.0209);transform-origin:1.15px 0;">States</div>
<svg class="abs" style="left:1000.0px;top:1262.0px" width="26" height="26" viewBox="0 0 26 26"><path d="M16.35 5.6 V3.5 Q16.35 1.95 14.8 1.95 H3.5 Q2.05 1.95 2.05 3.5 V9.3 Q2.05 10.85 3.5 10.85 H8.8 V14.6 H5.2" fill="none" stroke="#1f1f1f" stroke-width="1.75" stroke-linecap="round"/><path d="M7.7 10.1 H9.9 V15.6 H7.7 Z" fill="#1f1f1f"/><rect x="13" y="9" width="9.2" height="13" rx="1.5" fill="none" stroke="#1f1f1f" stroke-width="1.65"/><rect x="12.3" y="18.9" width="10.6" height="3.9" rx="1.2" fill="#1f1f1f"/><circle cx="17.6" cy="20.9" r="0.95" fill="#fff"/></svg><div class="t" style="left:1090.13px;top:1264.22px;font-size:24.9px;line-height:24.9px;color:#2c2c2c;transform:scaleX(1.0208);transform-origin:1.87px 0;">13.2M</div>
<div class="t" style="left:1334.75px;top:1264.22px;font-size:24.9px;line-height:24.9px;color:#2c2c2c;transform:scaleX(1.0533);transform-origin:0.50px 0;">4.7M</div>
<div class="t" style="left:1556.00px;top:1264.22px;font-size:24.9px;line-height:24.9px;color:#2c2c2c;transform:scaleX(1.0286);transform-origin:0.50px 0;">421.8K</div>
<div class="t" style="left:1697.13px;top:1264.22px;font-size:24.9px;line-height:24.9px;color:#2c2c2c;transform:scaleX(1.0566);transform-origin:1.12px 0;">8.99%</div>
<div class="t" style="left:1896.00px;top:1264.22px;font-size:24.9px;line-height:24.9px;color:#2c2c2c;transform:scaleX(1.0444);transform-origin:1.00px 0;">0.4</div>
<div class="abs" style="left:56px;top:1350px;width:1934px;height:2px;background:#dcdfe2"></div>

</body></html>
